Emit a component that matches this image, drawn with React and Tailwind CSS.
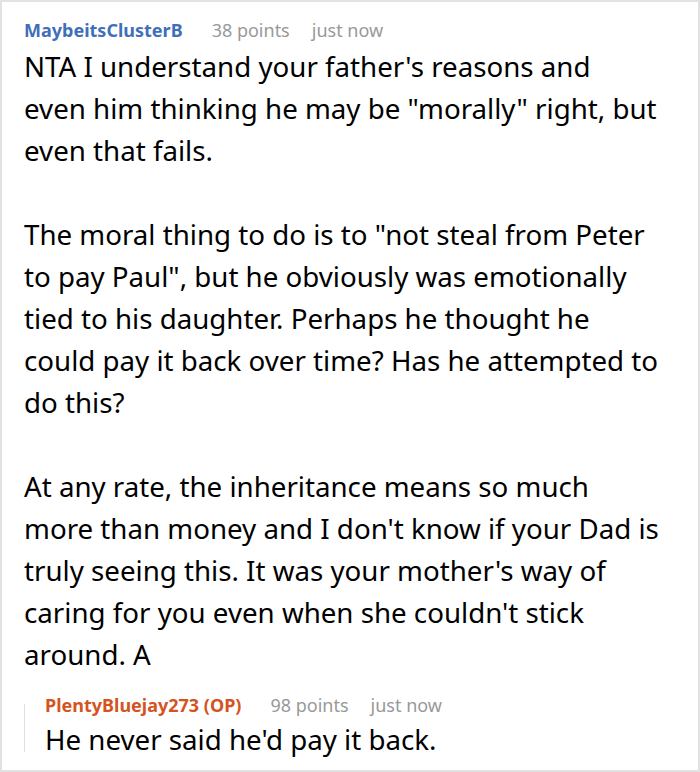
import React from "react";

// line breaks kept as in the original comment card
const paragraphs = [
  [
    "NTA I understand your father's reasons and",
    "even him thinking he may be \"morally\" right, but",
    "even that fails.",
  ],
  [
    "The moral thing to do is to \"not steal from Peter",
    "to pay Paul\", but he obviously was emotionally",
    "tied to his daughter. Perhaps he thought he",
    "could pay it back over time? Has he attempted to",
    "do this?",
  ],
  [
    "At any rate, the inheritance means so much",
    "more than money and I don't know if your Dad is",
    "truly seeing this. It was your mother's way of",
    "caring for you even when she couldn't stick",
    "around. A",
  ],
];

function Meta({ name, points, color }) {
  return (
    <div className="flex items-baseline text-[18px] leading-[26px]">
      <span className={`font-bold ${color}`}>{name}</span>
      <span className="ml-[29px] text-[#999]">{points} points</span>
      <span className="ml-[22px] text-[#999]">just now</span>
    </div>
  );
}

export default function App() {
  return (
    <div
      className="w-[700px] h-[772px] bg-white border-2 border-[#e2e2e2] overflow-hidden text-black"
      style={{ fontFamily: "'Noto Sans', sans-serif" }}
    >
      <div className="pt-[15px] pl-[22px] pr-4">
        <Meta name="MaybeitsClusterB" points="38" color="text-[#3f6fba]" />
        <div className="mt-[2px] text-[27.7px] leading-[42px] flex flex-col gap-[42px]">
          {paragraphs.map((lines, i) => (
            <p key={i}>
              {lines.map((l, j) => (
                <span key={j} className="block whitespace-nowrap">
                  {l}
                </span>
              ))}
            </p>
          ))}
        </div>

        {/* reply */}
        <div className="mt-[17px] flex">
          <div className="w-px bg-[#e0e0e0] mt-[12px] mb-[7px]" />
          <div className="pl-[20px]">
            <Meta name="PlentyBluejay273 (OP)" points="98" color="text-[#d4541f]" />
            <p className="mt-[1px] text-[27.7px] leading-[40px]">He never said he'd pay it back.</p>
          </div>
        </div>
      </div>
    </div>
  );
}
